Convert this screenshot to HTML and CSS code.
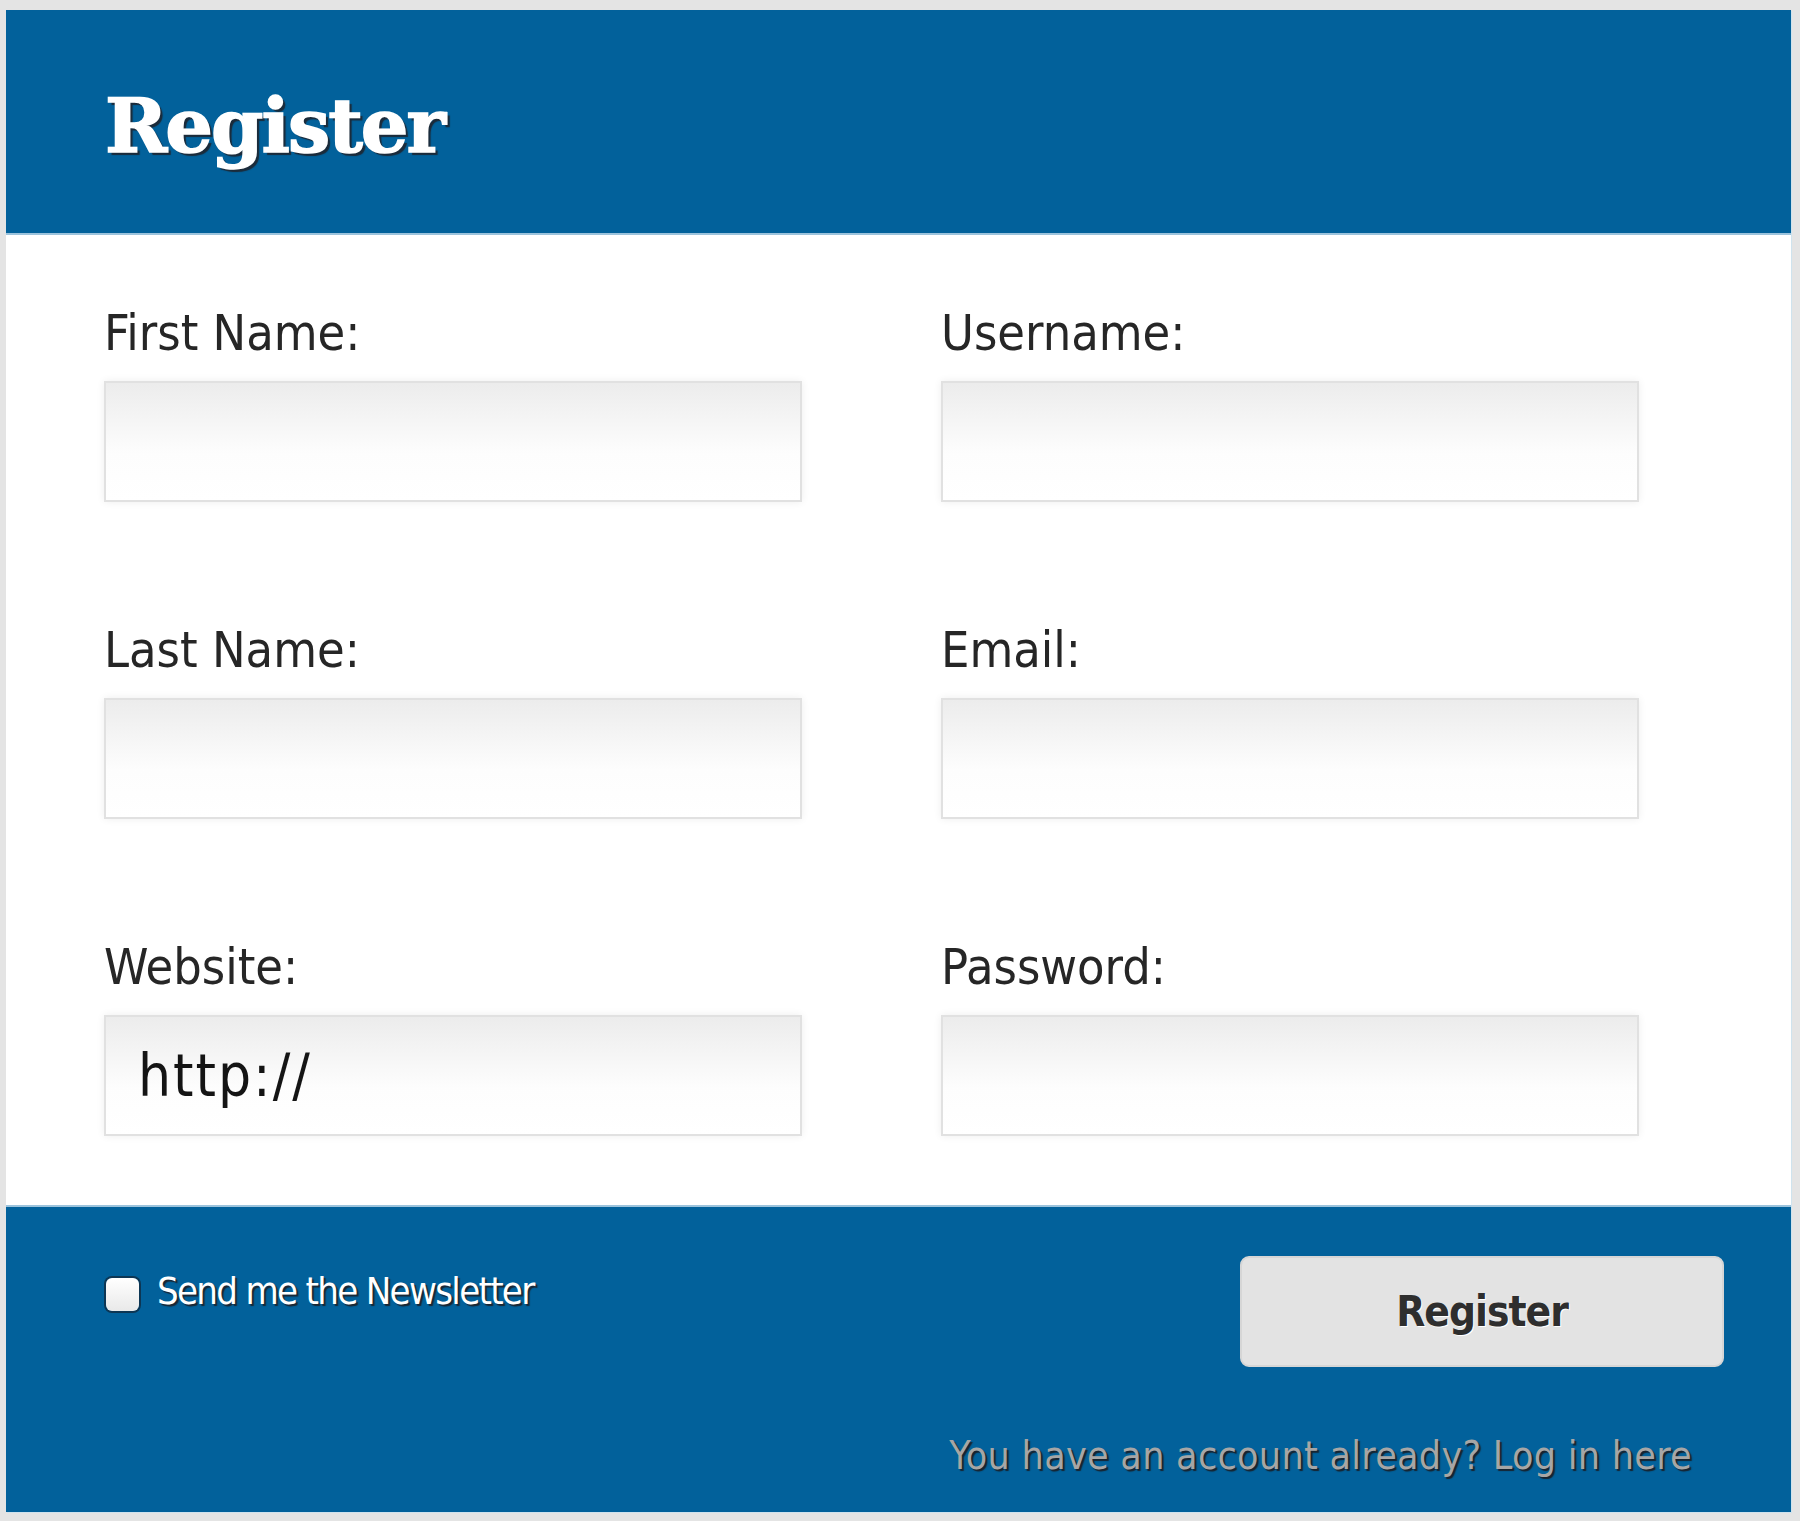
FILE: index.html
```html
<!DOCTYPE html>
<html lang="en">
<head>
  <meta charset="UTF-8">
  <meta name="viewport" content="width=device-width, initial-scale=1.0">
  <title>Register</title>
  <link rel="stylesheet" href="styles.css">
</head>
<body>
  <div class="register-box">
    <div class="register-header">
      <h1>Register</h1>
    </div>

    <form class="register-form">
      <div class="fields">
        <div class="field">
          <label for="first-name">First Name:</label>
          <input type="text" id="first-name">
        </div>
        <div class="field">
          <label for="username">Username:</label>
          <input type="text" id="username">
        </div>
        <div class="field">
          <label for="last-name">Last Name:</label>
          <input type="text" id="last-name">
        </div>
        <div class="field">
          <label for="email">Email:</label>
          <input type="text" id="email">
        </div>
        <div class="field">
          <label for="website">Website:</label>
          <input type="text" id="website" class="url-input" value="http://">
        </div>
        <div class="field">
          <label for="password">Password:</label>
          <input type="password" id="password">
        </div>
      </div>

      <div class="register-footer">
        <div class="footer-row">
          <label class="newsletter">
            <input type="checkbox">
            <span>Send me the Newsletter</span>
          </label>
          <button type="submit">Register</button>
        </div>
        <p class="login-line"><a href="#">You have an account already? Log in here</a></p>
      </div>
    </form>
  </div>
</body>
</html>
```

FILE: styles.css
```css
body {
  margin: 0;
  background-color: #e4e4e4;
  font-family: "DejaVu Sans Condensed", "DejaVu Sans", sans-serif;
  font-stretch: condensed;
}

.register-box {
  width: 1785px;
  margin: 10px 0 9px 6px;
  background-color: #fff;
  box-shadow: 1px 1px 0 #cfe3ee;
}

.register-header {
  background-color: #02619b;
  padding: 76px 0 67px 99px;
  border-bottom: 2px solid #9cc3dc;
}

.register-header h1 {
  margin: 0;
  font-family: "DejaVu Serif", serif;
  font-stretch: normal;
  font-size: 75px;
  line-height: 80px;
  font-weight: bold;
  letter-spacing: -2px;
  color: #fff;
  -webkit-text-stroke: 1.5px #fff;
  text-shadow: 3px 3px 1px #1b2b3a;
}

.fields {
  display: grid;
  grid-template-columns: 698px 698px;
  column-gap: 139px;
  row-gap: 118px;
  padding: 68px 0 69px 98px;
}

.field label {
  display: block;
  font-size: 50px;
  line-height: 60px;
  color: #262626;
  margin-bottom: 18px;
}

.field input {
  display: block;
  box-sizing: border-box;
  width: 698px;
  height: 121px;
  margin: 0;
  padding: 0 0 0 32px;
  border: 2px solid #e1e1e1;
  background: linear-gradient(#ececec, #fdfdfd 60%, #fff);
  box-shadow: 0 0 8px rgba(0, 0, 0, 0.07);
  font-family: inherit;
  font-stretch: condensed;
  font-size: 58px;
  color: #141414;
  outline: none;
}

.field .url-input {
  letter-spacing: 2px;
}

.register-footer {
  background-color: #02619b;
  border-top: 2px solid #9cc3dc;
  padding: 49px 67px 33px 100px;
}

.footer-row {
  display: flex;
  justify-content: space-between;
  align-items: flex-start;
}

.newsletter {
  display: flex;
  align-items: center;
  gap: 18px;
  margin-top: 13px;
  font-size: 38px;
  letter-spacing: -1.7px;
  color: #fff;
  text-shadow: 2px 2px 1px #1a2734;
}

.newsletter input {
  appearance: none;
  width: 33px;
  height: 33px;
  margin: 6px 0 0;
  border-radius: 6px;
  background: linear-gradient(#fff, #e9e9e9);
  box-shadow: 0 0 0 2px #0d3654;
}

button {
  width: 484px;
  height: 111px;
  border: 2px solid #d6d6d6;
  border-radius: 9px;
  background-color: #e3e3e3;
  font-family: inherit;
  font-stretch: condensed;
  font-size: 42px;
  font-weight: bold;
  letter-spacing: -1px;
  color: #2e2e2e;
  text-shadow: 1px 1px 0 #fff;
  cursor: pointer;
}

.login-line {
  margin: 66px 32px 0 0;
  text-align: right;
  font-size: 39px;
  line-height: 46px;
  letter-spacing: 0.3px;
}

.login-line a {
  color: #a6a6a6;
  text-decoration: none;
  text-shadow: 2px 2px 1px #172430;
}
```
